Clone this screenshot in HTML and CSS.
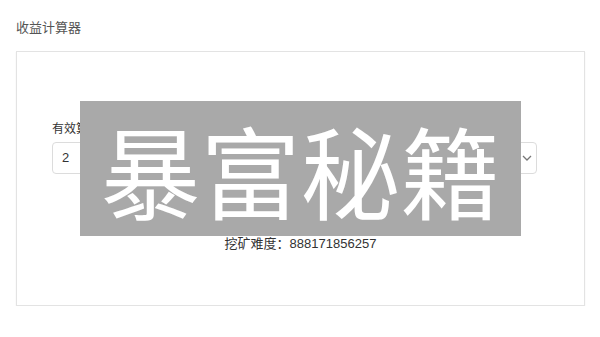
FILE: index.html
```html
<!DOCTYPE html>
<html lang="zh">
<head>
<meta charset="utf-8">
<title>收益计算器</title>
<link rel="stylesheet" href="styles.css">
</head>
<body>
<div class="page">
  <h2 class="title">收益计算器</h2>
  <div class="card">
    <div class="form">
      <div class="field">
        <label class="label">有效算力</label>
        <div class="input">2</div>
      </div>
      <div class="field">
        <label class="label">单位</label>
        <div class="input select">
          <span>TH/s</span>
          <svg class="chev" width="10" height="6" viewBox="0 0 10 6"><path d="M1 1 L5 5 L9 1" fill="none" stroke="#777" stroke-width="1.3"/></svg>
        </div>
      </div>
    </div>
    <div class="diff">挖矿难度：888171856257</div>
    <div class="mask">暴富秘籍</div>
  </div>
</div>
</body>
</html>
```
FILE: styles.css
```css
html, body {
  margin: 0;
  padding: 0;
  background: #fff;
}
body {
  font-family: "Liberation Sans", "Noto Sans CJK SC", sans-serif;
  color: #333;
}
.page {
  padding: 20px 15px 0 16px;
}
.title {
  margin: 0;
  font-size: 13px;
  font-weight: normal;
  line-height: 16px;
  color: #555;
  height: 31px;
}
.card {
  position: relative;
  height: 255px;
  border: 1px solid #e3e3e3;
  box-shadow: 0 1px 1px #e6e6e6;
  box-sizing: border-box;
  padding: 69px 47px 0 35px;
}
.form {
  display: grid;
  grid-template-columns: 1fr 1fr;
  column-gap: 16px;
}
.field {
  display: flex;
  flex-direction: column;
}
.label {
  font-size: 12px;
  line-height: 17px;
  color: #333;
  margin-bottom: 4px;
}
.input {
  height: 32px;
  box-sizing: border-box;
  border: 1px solid #dcdcdc;
  border-radius: 4px;
  padding: 0 9px;
  font-size: 13px;
  line-height: 30px;
  color: #333;
}
.select {
  display: flex;
  align-items: center;
  justify-content: space-between;
  padding-right: 4px;
}
.chev {
  display: block;
}
.diff {
  margin-top: 63px;
  margin-left: -35px;
  margin-right: -47px;
  text-align: center;
  font-size: 13px;
  line-height: 13px;
  color: #333;
}
.mask {
  position: absolute;
  left: 63px;
  top: 49px;
  width: 441px;
  height: 135px;
  background: #a9a9a9;
  color: #fff;
  font-family: "Noto Sans CJK SC", sans-serif;
  font-size: 100px;
  line-height: 135px;
  text-align: center;
  white-space: nowrap;
}
```
